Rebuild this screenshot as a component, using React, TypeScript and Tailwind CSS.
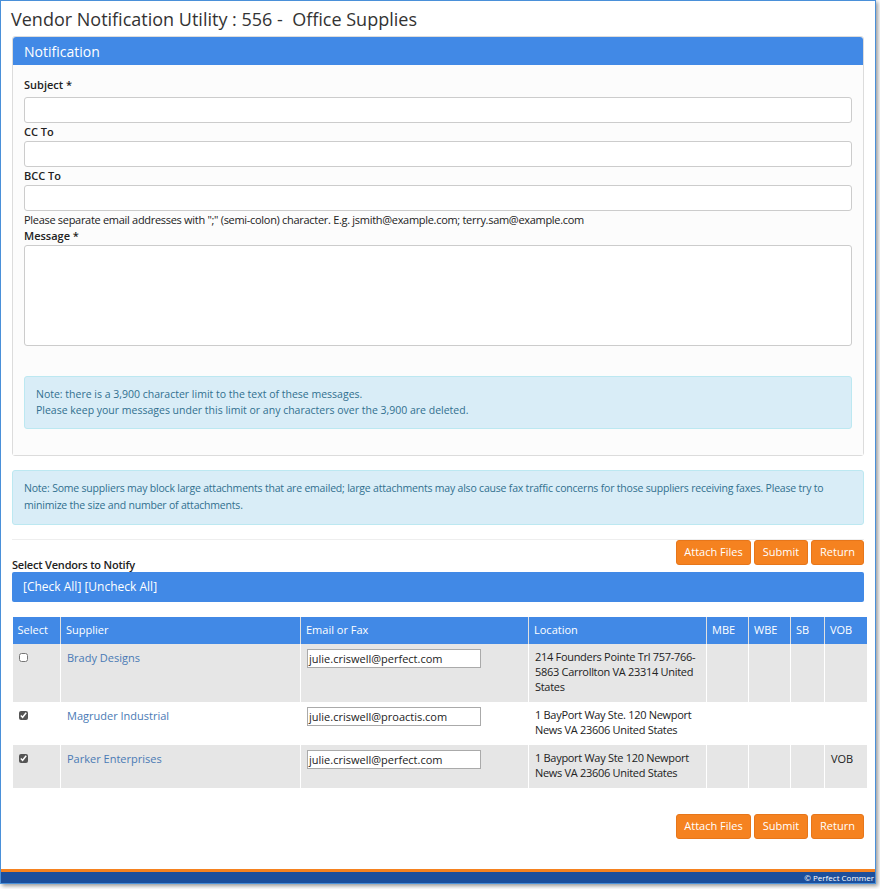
import React from "react";

const Btns = () => (
  <div className="flex gap-[3px]">
    {[["Attach Files", 75], ["Submit", 54], ["Return", 53]].map(([b, w]) => (
      <button key={b as string} style={{ width: w as number }} className="h-[25px] bg-[#f58220] text-white text-[11px] rounded-[3px] border border-[#e7761a]">{b}</button>
    ))}
  </div>
);

const rows = [
  { c: false, s: "Brady Designs", e: "julie.criswell@perfect.com", l: "214 Founders Pointe Trl 757-766-5863 Carrollton VA 23314 United States", v: "", bg: "bg-[#e6e6e6]", h: "h-[58px]" },
  { c: true, s: "Magruder Industrial", e: "julie.criswell@proactis.com", l: "1 BayPort Way Ste. 120 Newport News VA 23606 United States", v: "", bg: "bg-white", h: "h-[43px]" },
  { c: true, s: "Parker Enterprises", e: "julie.criswell@perfect.com", l: "1 Bayport Way Ste 120 Newport News VA 23606 United States", v: "VOB", bg: "bg-[#e6e6e6]", h: "h-[43px]" },
];

export default function App() {
  return (
    <div className="w-[880px] h-[889px] bg-white" style={{ fontFamily: '"Open Sans", sans-serif' }}>
      <div className="w-[876px] h-[884px] border border-[#4a90d9] shadow-[2px_2px_4px_rgba(0,0,0,0.4)] flex flex-col text-[#333]">
        <div className="text-[18px] text-[#333] px-[10px] pt-[5px] h-[35px]">Vendor Notification Utility : 556 - &nbsp;Office Supplies</div>
        <div className="mx-[11px] border border-[#dcdcdc] rounded-[3px]">
          <div className="h-[28px] bg-[#4189e6] text-white text-[14px] px-[11px] flex items-center rounded-t-[3px]">Notification</div>
          <div className="bg-[#fcfcfc] px-[11px] pt-[12px] pb-[26px] text-[11px]">
            <div className="font-semibold text-[#222] h-[20px]">Subject *</div>
            <div className="h-[26px] border border-[#ccc] rounded-[3px] bg-white" />
            <div className="font-semibold text-[#222] h-[18px] pt-[1px]">CC To</div>
            <div className="h-[26px] border border-[#ccc] rounded-[3px] bg-white" />
            <div className="font-semibold text-[#222] h-[18px] pt-[1px]">BCC To</div>
            <div className="h-[26px] border border-[#ccc] rounded-[3px] bg-white" />
            <div className="text-[#222] h-[16px] mt-[1px] leading-[16px] tracking-[-0.3px]">Please separate email addresses with ";" (semi-colon) character. E.g. jsmith@example.com; terry.sam@example.com</div>
            <div className="font-semibold text-[#222] h-[17px]">Message *</div>
            <div className="h-[101px] border border-[#ccc] rounded-[3px] bg-white" />
            <div className="mt-[30px] h-[53px] bg-[#d9edf7] border border-[#bce8f1] rounded-[3px] px-[11px] pt-[9px] text-[10.5px] leading-[16px] text-[#31708f]">
              Note: there is a 3,900 character limit to the text of these messages.<br />
              Please keep your messages under this limit or any characters over the 3,900 are deleted.
            </div>
          </div>
        </div>
        <div className="mx-[11px] mt-[14px] h-[55px] bg-[#d9edf7] border border-[#bce8f1] rounded-[3px] px-[11px] pt-[9px] text-[10.5px] leading-[17px] text-[#31708f] tracking-[-0.2px]">
          Note: Some suppliers may block large attachments that are emailed; large attachments may also cause fax traffic concerns for those suppliers receiving faxes. Please try to minimize the size and number of attachments.
        </div>
        <div className="mx-[11px] mt-[14px] border-t border-[#eee] flex justify-between items-end">
          <div className="text-[11px] font-semibold text-[#222] mb-[-8px] tracking-[-0.2px]">Select Vendors to Notify</div>
          <Btns />
        </div>
        <div className="mx-[11px] mt-[7px] h-[30px] bg-[#4189e6] rounded-[2px] text-white text-[12px] px-[11px] flex items-center">[Check All] [Uncheck All]</div>
        <table className="mx-[11px] mt-[15px] w-[854px] text-[11px] border-collapse table-fixed">
          <thead>
            <tr className="bg-[#4189e6] text-white h-[27px] text-left">
              {[["Select", 48], ["Supplier", 240], ["Email or Fax", 228], ["Location", 178], ["MBE", 42], ["WBE", 42], ["SB", 34], ["VOB", 42]].map(([t, w]) => (
                <th key={t as string} style={{ width: w as number }} className="font-normal px-[5px] border-l border-[#e0e0e0] first:border-l-0">{t}</th>
              ))}
            </tr>
          </thead>
          <tbody>
            {rows.map((r) => (
              <tr key={r.s} className={`${r.bg} ${r.h} align-top`}>
                <td className="px-[6px] pt-[6px] border-l border-[#fff]">
                  <input type="checkbox" defaultChecked={r.c} className="w-[9px] h-[9px] accent-[#555]" />
                </td>
                <td className="px-[6px] pt-[6px] text-[#4a7ab5] border-l border-white">{r.s}</td>
                <td className="px-[6px] pt-[5px] border-l border-white">
                  <div className="w-[174px] h-[19px] border border-[#aaa] bg-white text-[11px] px-[1px] leading-[17px] text-[#222]">{r.e}</div>
                </td>
                <td className="pl-[6px] pr-[2px] pt-[5px] leading-[15px] text-[#222] border-l border-white tracking-[-0.3px]">{r.l}</td>
                <td className="border-l border-white" />
                <td className="border-l border-white" />
                <td className="border-l border-white" />
                <td className="px-[6px] pt-[6px] text-[#222] border-l border-white">{r.v}</td>
              </tr>
            ))}
          </tbody>
        </table>
        <div className="mx-[11px] mt-[26px] flex justify-end"><Btns /></div>
        <div className="flex-1" />
        <div className="h-[3px] bg-[#f58220]" />
        <div className="h-[11px] bg-[#1c4f9c] text-white text-[8px] leading-[11px] text-right pr-[1px] overflow-hidden whitespace-nowrap">© Perfect Commer</div>
      </div>
    </div>
  );
}
